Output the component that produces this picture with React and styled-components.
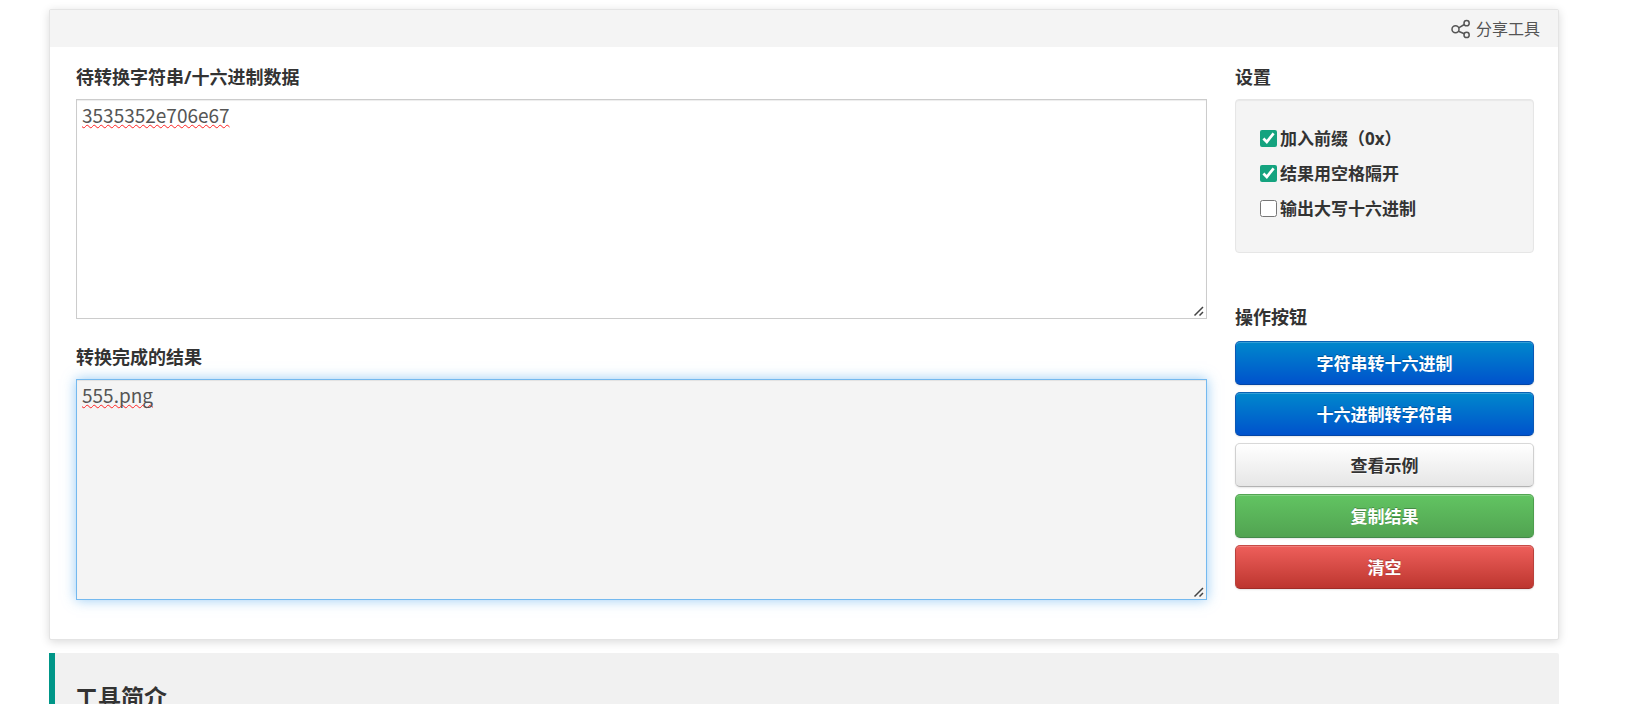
import React, { useState, useCallback } from "react";
import styled, { createGlobalStyle, css } from "styled-components";

const GlobalStyle = createGlobalStyle`
    * {
        box-sizing: border-box;
    }

    body {
        margin: 0;
        background: #fff;
        color: #333;
        font-family: "Open Sans", "Noto Sans CJK SC", sans-serif;
        font-size: 16px;
    }
`;

const Page = styled.main`
    padding: 9px 90px 0 49px;
`;

const Card = styled.section`
    border: 1px solid #e4e4e4;
    border-radius: 2px;
    background: #fff;
    box-shadow: 0 2px 10px rgba(0, 0, 0, 0.15);
`;

const CardHeader = styled.header`
    display: flex;
    justify-content: flex-end;
    align-items: center;
    height: 37px;
    padding: 1px 18px 0;
    background: #f4f4f4;
`;

const ShareLink = styled.a`
    display: flex;
    align-items: center;
    gap: 5px;
    color: #555;
    font-size: 16px;
    line-height: 24px;
    text-decoration: none;
`;

const CardBody = styled.div`
    display: grid;
    grid-template-columns: minmax(0, 1fr) 299px;
    gap: 28px;
    padding: 12px 24px 39px 26px;
`;

const Column = styled.div`
    display: flex;
    flex-direction: column;
`;

const titleStyle = css`
    display: block;
    margin: 0 0 4px;
    font-size: 18px;
    font-weight: 700;
    line-height: 36px;
`;

const FieldLabel = styled.label`
    ${titleStyle}
`;

const SideTitle = styled.h3`
    ${titleStyle}
`;

// Штрихи уголка для изменения размера
const GRIP = `url("data:image/svg+xml,%3Csvg xmlns='http://www.w3.org/2000/svg' width='15' height='15' fill='none' stroke='%23444' stroke-width='1.5'%3E%3Cpath d='M3.5 12.5l8.5-8.5M8.5 12.5l3.5-3.5'/%3E%3C/svg%3E")`;

const TextArea = styled.textarea`
    display: block;
    width: 100%;
    height: 220px;
    margin: 0 0 20px;
    padding: 3px 5px;
    border: 1px solid ${props => props.$active ? "#74b9ef" : "#ccc"};
    border-radius: 0;
    outline: none;
    background: ${props => props.$active ? "#f4f4f4" : "#fff"};
    box-shadow: inset 0 1px 1px rgba(0, 0, 0, 0.075)${props => props.$active ? ", 0 0 12px rgba(82, 168, 236, 0.6)" : ""};
    color: #555;
    font-family: "Noto Sans CJK SC", sans-serif;
    font-size: 19px;
    font-weight: 400;
    line-height: 24px;
    text-decoration: underline wavy #f22 1px;
    text-decoration-skip-ink: none;
    resize: both;

    &::-webkit-resizer {
        background: ${GRIP} no-repeat right bottom;
    }

    &:last-child {
        height: 221px;
        margin-bottom: 0;
    }
`;

const SettingsPanel = styled.div`
    display: flex;
    flex-direction: column;
    height: 154px;
    margin-bottom: 46px;
    padding: 21px 24px;
    border: 1px solid #e6e6e6;
    border-radius: 4px;
    background: #f4f4f4;
    box-shadow: inset 0 1px 1px rgba(0, 0, 0, 0.05);
`;

const CheckLabel = styled.label`
    display: flex;
    align-items: center;
    gap: 3px;
    height: 35px;
    font-size: 17px;
    font-weight: 700;
    line-height: 35px;
`;

const CheckBox = styled.input`
    width: 17px;
    height: 17px;
    margin: 0;
    accent-color: #14a37f;
`;

const ButtonList = styled.div`
    display: flex;
    flex-direction: column;
    gap: 7px;
    padding-top: 2px;
`;

const variants = {
    primary: css`
        border-color: #0a63b5 #0a58b5 #0345a5;
        background-image: linear-gradient(#0088cc, #0052cc);
    `,
    plain: css`
        border-color: #d8d8d8 #d0d0d0 #b3b3b3;
        background-image: linear-gradient(#fff, #e6e6e6);
        color: #333;
        text-shadow: 0 1px 1px rgba(255, 255, 255, 0.75);
    `,
    success: css`
        border-color: #53a653 #4d9e4d #43894a;
        background-image: linear-gradient(#62c462, #51a351);
    `,
    danger: css`
        border-color: #c74b47 #b9413c #a02c27;
        background-image: linear-gradient(#ee5f5b, #bd362f);
    `
};

const ActionButton = styled.button`
    height: 44px;
    padding: 2px 12px 0;
    border: 1px solid;
    border-radius: 5px;
    box-shadow: inset 0 1px 0 rgba(255, 255, 255, 0.2), 0 1px 2px rgba(0, 0, 0, 0.1);
    color: #fff;
    font-family: inherit;
    font-size: 17px;
    font-weight: 700;
    line-height: 24px;
    text-shadow: 0 -1px 0 rgba(0, 0, 0, 0.25);
    cursor: pointer;
    ${props => variants[props.$variant]}
`;

const Intro = styled.section`
    margin-top: 13px;
    padding: 26px 20px;
    border-left: 6px solid #009688;
    border-radius: 0 2px 2px 0;
    background: #f1f1f1;
`;

const IntroTitle = styled.h2`
    margin: 0;
    font-size: 23px;
    font-weight: 700;
    line-height: 36px;
`;

const SETTINGS = [
    { id: "prefix", label: "加入前缀（0x）", checked: true },
    { id: "spaces", label: "结果用空格隔开", checked: true },
    { id: "upper", label: "输出大写十六进制", checked: false }
];

const ACTIONS = [
    { id: "encode", label: "字符串转十六进制", variant: "primary" },
    { id: "decode", label: "十六进制转字符串", variant: "primary" },
    { id: "sample", label: "查看示例", variant: "plain" },
    { id: "copy", label: "复制结果", variant: "success" },
    { id: "clear", label: "清空", variant: "danger" }
];

function ShareIcon() {
    return (
        <svg width="20" height="20" viewBox="0 0 20 20" fill="none" stroke="#555" strokeWidth="1.5" aria-hidden="true">
            <circle cx="4.5" cy="10.3" r="3.5" />
            <circle cx="15.6" cy="4.2" r="2.6" />
            <circle cx="15.6" cy="15.9" r="2.6" />
            <path d="M7.7 8.8L13.3 5.5M7.4 12.2L13.3 14.8" />
        </svg>
    );
}

function App() {
    const [source, setSource] = useState("3535352e706e67");
    const [result, setResult] = useState("555.png");

    const handleAction = useCallback((id) => {
        if (id === "clear") {
            setSource("");
            setResult("");
        }
    }, []);

    return (
        <Page>
            <GlobalStyle />
            <Card>
                <CardHeader>
                    <ShareLink href="#share">
                        <ShareIcon />
                        分享工具
                    </ShareLink>
                </CardHeader>

                <CardBody>
                    <Column>
                        <FieldLabel htmlFor="source">待转换字符串/十六进制数据</FieldLabel>
                        <TextArea
                            id="source"
                            spellCheck={false}
                            value={source}
                            onChange={(e) => setSource(e.target.value)}
                        />
                        <FieldLabel htmlFor="result">转换完成的结果</FieldLabel>
                        <TextArea
                            id="result"
                            $active
                            spellCheck={false}
                            value={result}
                            onChange={(e) => setResult(e.target.value)}
                        />
                    </Column>

                    <Column>
                        <SideTitle>设置</SideTitle>
                        <SettingsPanel>
                            {SETTINGS.map((item) => (
                                <CheckLabel key={item.id} htmlFor={item.id}>
                                    <CheckBox id={item.id} type="checkbox" defaultChecked={item.checked} />
                                    {item.label}
                                </CheckLabel>
                            ))}
                        </SettingsPanel>

                        <SideTitle>操作按钮</SideTitle>
                        <ButtonList>
                            {ACTIONS.map((item) => (
                                <ActionButton
                                    key={item.id}
                                    type="button"
                                    $variant={item.variant}
                                    onClick={() => handleAction(item.id)}
                                >
                                    {item.label}
                                </ActionButton>
                            ))}
                        </ButtonList>
                    </Column>
                </CardBody>
            </Card>

            <Intro>
                <IntroTitle>工具简介</IntroTitle>
            </Intro>
        </Page>
    );
}

export default App;
